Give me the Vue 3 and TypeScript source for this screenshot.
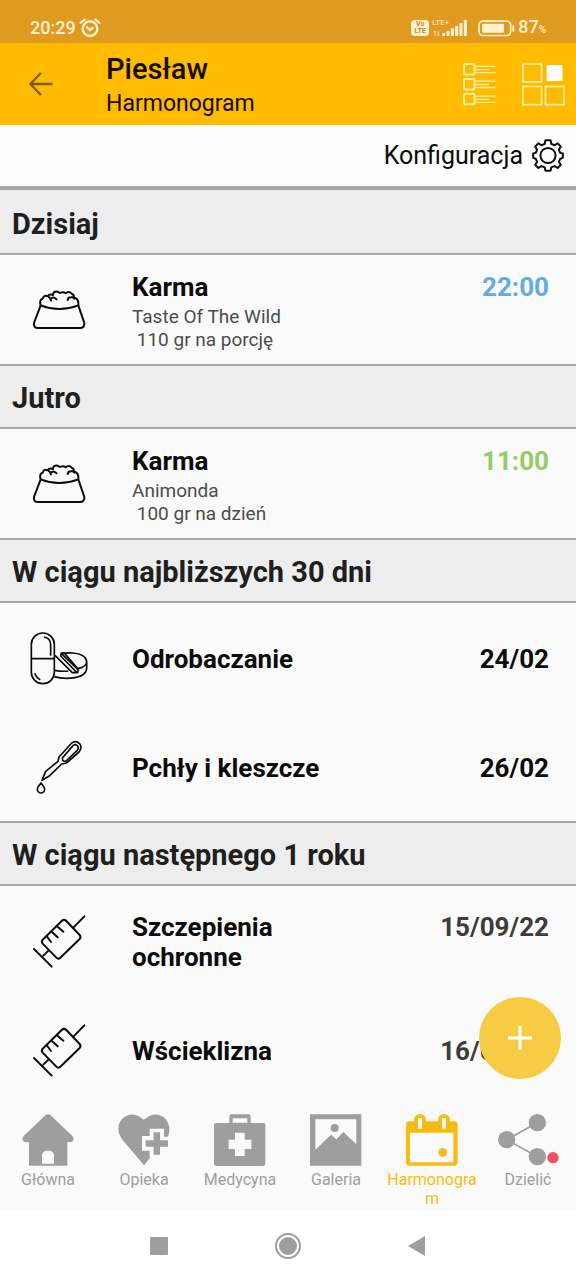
<script setup lang="ts">
type IconName = 'bowl' | 'pills' | 'dropper' | 'syringe'

interface Entry {
  icon: IconName
  title: string
  details?: string[]
  when: string
  tone?: 'blue' | 'green' | 'grey'
}

interface Group {
  heading: string
  entries: Entry[]
}

const groups: Group[] = [
  {
    heading: 'Dzisiaj',
    entries: [
      { icon: 'bowl', title: 'Karma', details: ['Taste Of The Wild', ' 110 gr na porcję'], when: '22:00', tone: 'blue' },
    ],
  },
  {
    heading: 'Jutro',
    entries: [
      { icon: 'bowl', title: 'Karma', details: ['Animonda', ' 100 gr na dzień'], when: '11:00', tone: 'green' },
    ],
  },
  {
    heading: 'W ciągu najbliższych 30 dni',
    entries: [
      { icon: 'pills', title: 'Odrobaczanie', when: '24/02' },
      { icon: 'dropper', title: 'Pchły i kleszcze', when: '26/02' },
    ],
  },
  {
    heading: 'W ciągu następnego 1 roku',
    entries: [
      { icon: 'syringe', title: 'Szczepienia ochronne', when: '15/09/22', tone: 'grey' },
      { icon: 'syringe', title: 'Wścieklizna', when: '16/09/22', tone: 'grey' },
    ],
  },
]

const tabs = [
  { id: 'home', label: 'Główna' },
  { id: 'care', label: 'Opieka' },
  { id: 'medicine', label: 'Medycyna' },
  { id: 'gallery', label: 'Galeria' },
  { id: 'schedule', label: 'Harmonogram' },
  { id: 'share', label: 'Dzielić' },
]
const activeTab = 'schedule'
</script>

<template>
  <div class="screen">
    <div class="status">
      <div class="status-side">
        <span class="clock">20:29</span>
        <svg class="alarm" viewBox="0 0 66 60" fill="none" stroke="currentColor" stroke-width="7" stroke-linecap="round">
          <circle cx="33" cy="32" r="22" />
          <path d="M24 28l9 8 8-6M5 14L17 5M61 14L49 5" />
        </svg>
      </div>
      <div class="status-side">
        <span class="volte"><span>Vo</span><span>LTE</span></span>
        <span class="signal">
          <span class="network">LTE+</span>
          <svg class="bars" viewBox="0 0 110 54" fill="currentColor">
            <path d="M8 36v14M4 40l4-4 4 4M18 36v14M14 46l4 4 4-4" fill="none" stroke="currentColor" stroke-width="2" />
            <rect x="30" y="42" width="9" height="9" rx="2" />
            <rect x="43" y="36" width="9" height="15" rx="2" />
            <rect x="56" y="28" width="9" height="23" rx="2" />
            <rect x="69" y="21" width="9" height="30" rx="2" />
            <rect x="82" y="12" width="9" height="39" rx="2" />
            <rect x="95" y="2" width="9" height="49" rx="2" />
          </svg>
        </span>
        <svg class="battery" viewBox="0 0 111 50" fill="none">
          <rect x="3" y="3" width="95" height="43" rx="12" stroke="currentColor" stroke-width="5" />
          <rect x="12" y="11" width="66" height="27" rx="4" fill="currentColor" />
          <path d="M106 18v14" stroke="currentColor" stroke-width="6" stroke-linecap="round" />
        </svg>
        <span class="clock">87<small>%</small></span>
      </div>
    </div>

    <header class="bar">
      <button class="plain back" type="button" aria-label="Wstecz">
        <svg viewBox="0 0 72 72" fill="none" stroke="currentColor" stroke-width="7">
          <path d="M70 36H5M36 3L4 36l32 33" />
        </svg>
      </button>
      <div class="titles">
        <h1>Piesław</h1>
        <p>Harmonogram</p>
      </div>
      <button class="plain view list-view" type="button" aria-label="Widok listy">
        <svg viewBox="0 0 100 130" fill="none" stroke="currentColor">
          <g v-for="y in [0, 45, 90]" :key="y">
            <rect x="3" :y="y + 3" width="32" height="32" rx="5" stroke-width="6" />
            <path :d="`M39 ${y + 10}h60M39 ${y + 20}h40M39 ${y + 29}h60`" stroke-width="4" />
          </g>
        </svg>
      </button>
      <button class="plain view grid-view" type="button" aria-label="Widok siatki">
        <svg viewBox="0 0 130 130" fill="none" stroke="currentColor" stroke-width="5">
          <rect x="3" y="3" width="56" height="54" />
          <rect x="3" y="71" width="56" height="55" />
          <rect x="71" y="71" width="56" height="55" />
          <rect x="77" y="9" width="43" height="43" fill="#fff" stroke="#fff" />
        </svg>
      </button>
    </header>

    <div class="config">
      <button class="plain config-button" type="button">
        Konfiguracja
        <svg viewBox="0 0 96 100" fill="none" stroke="currentColor" stroke-width="6" stroke-linejoin="round">
          <circle cx="48" cy="50" r="23" />
          <path d="M40 4H56L58 15L68 19L77 13L87 23L81 32L85 42L93 44V57L85 60L81 69L87 78L77 88L68 82L58 86L56 96H40L38 86L28 82L19 88L9 78L15 69L11 60L3 57V44L11 42L15 32L9 23L19 13L28 19L38 15Z" />
        </svg>
      </button>
    </div>

    <div class="content">
      <main>
        <section v-for="group in groups" :key="group.heading" class="group">
          <h2>{{ group.heading }}</h2>
          <ul>
            <li v-for="entry in group.entries" :key="entry.title" class="entry">
              <div class="picture">
                <svg v-if="entry.icon === 'bowl'" viewBox="0 0 168 168">
                  <path d="M29 70L9 123Q7 137 19 138H149Q161 137 160 123L142 70M29 70Q84 92 142 70" />
                  <path d="M29 70Q24 54 35 50Q38 38 50 43Q54 35 66 39Q66 27 80 29Q84 34 90 32Q98 29 104 34Q114 25 122 35Q130 37 128 46Q144 50 142 70M52 44Q60 48 60 58M60 50Q70 42 78 54M110 56Q110 46 120 46Q128 44 132 52" />
                </svg>
                <svg v-else-if="entry.icon === 'pills'" class="wide fine" viewBox="0 0 180 180">
                  <rect x="7" y="15" width="69" height="152" rx="34" />
                  <path d="M7 92H76M45 27Q65 30 65 50V83M17 136Q22 150 34 155" />
                  <path d="M76 127Q100 131 118 129M146 122Q174 116 173 100Q170 78 132 75Q112 74 98 77M173 100V122Q170 150 112 151Q92 151 76 146" />
                  <path d="M78 82L130 134H146L148 124L106 75H97L95 84L144 134M97 76L148 126" />
                </svg>
                <svg v-else-if="entry.icon === 'dropper'" class="fine" viewBox="0 0 168 168">
                  <path d="M33 124L44 97L81 67L84 54L122 12Q134 3 146 14Q155 26 144 39L106 72L92 75L56 110Z" />
                  <path d="M94 57L126 20Q133 14 140 21Q145 28 138 35L105 66Q99 68 95 64Z" />
                  <path d="M30 132Q19 145 19 151A11 11 0 0 0 41 151Q41 145 30 132Z" />
                </svg>
                <svg v-else viewBox="0 0 168 168" stroke-linecap="round">
                  <path d="M92 24Q99 17 106 24L146 66Q151 72 146 78L88 134Q82 140 76 134L35 92Q30 86 35 80Z" />
                  <path d="M127 44L160 10M53 112L37 128M9 108L62 161M48 71L60 87M62 56L80 73M78 40L97 56" />
                </svg>
              </div>
              <div class="body">
                <div class="text">
                  <h3>{{ entry.title }}</h3>
                  <p v-if="entry.details" class="details">
                    <span v-for="line in entry.details" :key="line">{{ line }}</span>
                  </p>
                </div>
                <time class="when" :class="entry.tone">{{ entry.when }}</time>
              </div>
            </li>
          </ul>
        </section>
      </main>
      <button class="plain add" type="button" aria-label="Dodaj">
        <svg viewBox="0 0 24 24" fill="none" stroke="currentColor" stroke-width="3"><path d="M12 0v24M0 12h24" /></svg>
      </button>
    </div>

    <nav class="tabs">
      <a v-for="tab in tabs" :key="tab.id" href="#" :class="{ active: tab.id === activeTab }">
        <svg v-if="tab.id === 'home'" viewBox="0 0 156 156">
          <path d="M70 4Q78-3 86 4L151 66Q157 73 153 80Q148 87 136 84V155H21V84Q8 87 3 80Q-1 73 5 66Z" />
          <path class="hole" d="M60 149V124Q60 110 78 110Q96 110 96 124V149Z" />
        </svg>
        <svg v-else-if="tab.id === 'care'" viewBox="0 0 156 156">
          <path d="M78 154L12 76Q-10 42 12 15Q42-13 77 17Q114-13 143 15Q161 38 150 68Z" />
          <path class="hole" d="M95 44H138V68H162V110H138V133H95V110H72V66H95Z" />
          <path d="M107 55H126V79H150V98H126V122H107V98H83V79H107Z" />
        </svg>
        <svg v-else-if="tab.id === 'medicine'" viewBox="0 0 156 156">
          <rect y="27" width="154" height="129" rx="7" />
          <path fill-rule="evenodd" d="M52 1H104Q110 1 110 8V32H46V8Q46 1 52 1ZM56 13V26H100V13Z" />
          <path class="hole" d="M63 56H92V77H112V105H92V126H63V105H44V77H63Z" />
        </svg>
        <svg v-else-if="tab.id === 'gallery'" viewBox="0 0 156 156">
          <path d="M0 1H154V155H0Z" />
          <path class="hole" d="M16 16H139V91L100 54L79 76L63 62L16 107Z" />
          <circle cx="74" cy="42" r="12" />
        </svg>
        <svg v-else-if="tab.id === 'schedule'" viewBox="0 0 156 156">
          <rect y="22" width="155" height="133" rx="11" />
          <circle cx="42" cy="18" r="18" />
          <circle cx="114" cy="18" r="18" />
          <path class="hole" d="M12 56H142V145H12ZM36 12H48V44H36ZM108 12H120V44H108Z" />
          <circle cx="110" cy="115" r="13" />
        </svg>
        <svg v-else class="share" viewBox="0 0 183 156">
          <path d="M118 26L26 77L118 128" fill="none" stroke="currentColor" stroke-width="5" />
          <circle cx="26" cy="77" r="26" />
          <circle cx="118" cy="26" r="26" />
          <circle cx="118" cy="128" r="26" />
          <circle cx="165" cy="131" r="17" fill="#fb4d5c" />
        </svg>
        <span>{{ tab.label }}</span>
      </a>
    </nav>

    <div class="system">
      <button class="plain" type="button" aria-label="Ostatnie aplikacje">
        <svg viewBox="0 0 26 26"><rect x="4" y="4" width="18" height="18" rx="1" /></svg>
      </button>
      <button class="plain" type="button" aria-label="Ekran główny">
        <svg viewBox="0 0 26 26">
          <circle cx="13" cy="13" r="12" fill="none" stroke="currentColor" stroke-width="2" />
          <circle cx="13" cy="13" r="9" />
        </svg>
      </button>
      <button class="plain" type="button" aria-label="Cofnij">
        <svg viewBox="0 0 26 26"><path d="M21 3V23L4 13Z" /></svg>
      </button>
    </div>
  </div>
</template>

<style>
body {
  margin: 0;
}
</style>

<style scoped>
.screen {
  display: flex;
  flex-direction: column;
  min-height: 100vh;
  background: #fafafa;
  color: #0c0c0c;
  font-family: Roboto, "Liberation Sans", sans-serif;
}

h1, h2, h3, p, ul {
  margin: 0;
  padding: 0;
}

svg {
  display: block;
}

.plain {
  display: flex;
  align-items: center;
  justify-content: center;
  padding: 0;
  border: 0;
  background: none;
  color: inherit;
  font: inherit;
  cursor: pointer;
}

.status {
  display: flex;
  justify-content: space-between;
  box-sizing: border-box;
  height: 43px;
  padding: 16px 30px 3px;
  background: #e19a20;
  color: #fff3d0;
}

.status-side {
  display: flex;
  align-items: center;
  gap: 3px;
}

.clock {
  font-size: 18px;
  font-weight: 500;
  line-height: 24px;
}

.clock small {
  font-size: 10px;
}

.alarm {
  width: 22px;
  height: 20px;
}

.volte {
  display: flex;
  flex-direction: column;
  width: 18px;
  padding: 1px 0;
  border-radius: 4px;
  background: #fff3d0;
  color: #c98719;
  font-size: 7px;
  font-weight: 700;
  line-height: 7px;
  text-align: center;
}

.signal {
  display: grid;
  padding-right: 6px;
}

.network,
.bars {
  grid-area: 1 / 1;
}

.network {
  font-size: 8px;
  line-height: 8px;
}

.bars {
  width: 37px;
  height: 18px;
}

.battery {
  width: 37px;
  height: 17px;
}

.bar {
  display: flex;
  align-items: center;
  height: 82px;
  padding: 0 11px 0 29px;
  background: #ffbb00;
  color: #150c00;
}

.back {
  color: #7c5a08;
}

.back svg {
  width: 24px;
  height: 24px;
}

.titles {
  flex: 1;
  padding: 6px 0 0 53px;
}

.titles h1 {
  font-size: 29px;
  font-weight: 500;
  line-height: 34px;
}

.titles p {
  font-size: 23px;
  line-height: 36px;
}

.view {
  color: #fff0a0;
}

.list-view svg {
  width: 33px;
  height: 43px;
}

.grid-view {
  margin-left: 26px;
}

.grid-view svg {
  width: 43px;
  height: 43px;
}

.config {
  display: flex;
  justify-content: flex-end;
  height: 61px;
  padding-right: 12px;
  border-bottom: 4px solid #a8a8a8;
  background: #fcfcfc;
}

.config-button {
  gap: 9px;
  font-size: 25px;
}

.config-button svg {
  width: 32px;
  height: 33px;
}

.content {
  position: relative;
  flex: 1;
}

.group h2 {
  box-sizing: border-box;
  height: 65px;
  padding-left: 12px;
  border-top: 2px solid #a8a8a8;
  border-bottom: 2px solid #a8a8a8;
  background: #ededed;
  color: #1f1f1f;
  font-size: 29px;
  font-weight: 700;
  line-height: 64px;
}

.group:first-child h2 {
  border-top-color: #ededed;
}

.group ul {
  list-style: none;
}

.entry {
  display: grid;
  grid-template-columns: 118px 1fr;
  align-items: center;
  height: 109px;
  padding-right: 27px;
}

.picture svg {
  width: 56px;
  height: 56px;
  margin: 0 auto;
  fill: none;
  stroke: currentColor;
  stroke-width: 6;
  stroke-linejoin: round;
}

.picture .wide {
  width: 60px;
  height: 60px;
}

.picture .fine {
  stroke-width: 5;
}

.body {
  display: flex;
  align-items: baseline;
  justify-content: space-between;
  padding: 3px 0 0 14px;
}

.text {
  width: 200px;
}

.entry h3,
.when {
  font-size: 26px;
  font-weight: 700;
  line-height: 30px;
}

.details {
  padding-top: 3px;
  color: #4c4c4c;
  font-size: 19px;
  line-height: 23px;
}

.details span {
  display: block;
  white-space: pre;
}

.when.blue {
  color: #62ace4;
}

.when.green {
  color: #97cb64;
}

.when.grey {
  color: #3c3c3c;
}

.add {
  position: absolute;
  right: 15px;
  bottom: 25px;
  width: 82px;
  height: 82px;
  border-radius: 50%;
  background: #f7cc45;
  color: #fff;
}

.add svg {
  width: 24px;
  height: 24px;
}

.tabs {
  display: grid;
  grid-template-columns: repeat(6, 1fr);
  box-sizing: border-box;
  min-height: 107px;
  padding-top: 10px;
}

.tabs a {
  display: flex;
  flex-direction: column;
  align-items: center;
  gap: 4px;
  padding: 0 3px;
  color: #9e9e9e;
  font-size: 16px;
  line-height: 19px;
  text-align: center;
  text-decoration: none;
  word-break: break-all;
}

.tabs .active {
  color: #f9ba12;
}

.tabs svg {
  width: 52px;
  height: 52px;
  fill: currentColor;
}

.tabs .share {
  width: 61px;
}

.hole {
  fill: #fafafa;
}

.system {
  display: flex;
  justify-content: center;
  height: 69px;
  background: #fff;
  color: #9e9e9e;
}

.system button {
  width: 129px;
}

.system svg {
  width: 26px;
  height: 26px;
  fill: currentColor;
}
</style>
